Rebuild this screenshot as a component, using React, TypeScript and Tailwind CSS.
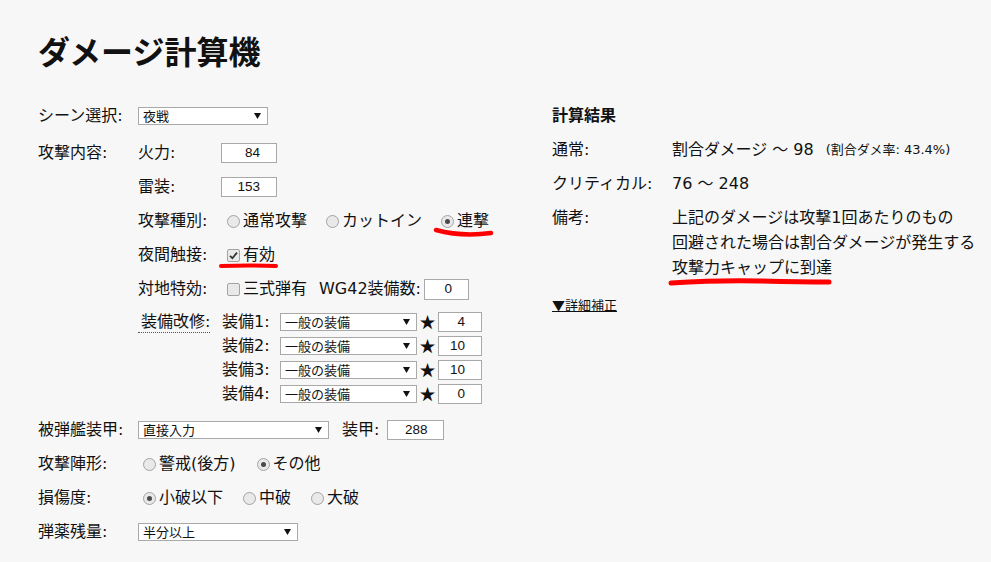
import React from 'react';

// native-looking form bits, drawn by hand so they match the screenshot
function Select({ className, value }: { className: string; value: string }) {
  return (
    <div
      className={`flex items-center justify-between border border-[#a9a9a9] bg-white pl-[4px] pr-[6px] text-[13px] leading-none ${className}`}
    >
      <span className="pt-[1px]">{value}</span>
      <svg width="7" height="6" viewBox="0 0 7 6">
        <polygon points="0,0 7,0 3.5,6" fill="#111" />
      </svg>
    </div>
  );
}

function NumBox({ className, value }: { className: string; value: string }) {
  return (
    <div
      className={`flex h-[20px] items-center justify-end border border-[#a9a9a9] bg-white pr-[16px] font-['Liberation_Sans',sans-serif] text-[13.5px] leading-none ${className}`}
    >
      {value}
    </div>
  );
}

function Radio({ checked, label }: { checked?: boolean; label: string }) {
  return (
    <span className="flex items-center">
      <span className="ml-[5px] mr-[3px] flex h-[13px] w-[13px] items-center justify-center rounded-full border border-[#a3a3a3] bg-[#e9e9e9]">
        {checked && <span className="h-[5px] w-[5px] rounded-full bg-[#4a4a4a]" />}
      </span>
      <span>{label}</span>
    </span>
  );
}

function Check({ checked, label }: { checked?: boolean; label: string }) {
  return (
    <span className="flex items-center">
      <span className="ml-[5px] mr-[3px] flex h-[13px] w-[13px] items-center justify-center rounded-[2px] border border-[#a3a3a3] bg-[#e9e9e9]">
        {checked && (
          <svg width="9" height="9" viewBox="0 0 9 9">
            <path d="M1 4.8 L3.4 7.2 L8 1.6" stroke="#333" strokeWidth="1.8" fill="none" />
          </svg>
        )}
      </span>
      <span>{label}</span>
    </span>
  );
}

const equips = [
  { name: '装備1:', star: '4' },
  { name: '装備2:', star: '10' },
  { name: '装備3:', star: '10' },
  { name: '装備4:', star: '0' },
];

function App() {
  return (
    <div className="relative min-h-[562px] bg-[#f7f7f7] pl-[38px] font-['DejaVu_Sans','Noto_Sans_CJK_JP',sans-serif] text-[16px] leading-[20px] text-[#111]">
      <h1 className="pt-[33px] text-[32px] font-bold leading-[40px]">ダメージ計算機</h1>

      <div className="mt-[26px] flex">
        {/* left: input form */}
        <div className="w-[514px]">
          <div className="mb-[3px] flex h-[34px] items-center">
            <div className="w-[100px]">シーン選択:</div>
            <Select className="h-[18px] w-[130px]" value="夜戦" />
          </div>

          <div className="flex">
            <div className="flex h-[34px] w-[100px] items-center">攻撃内容:</div>
            <div>
              <div className="flex h-[34px] items-center">
                <div className="w-[83px]">火力:</div>
                <NumBox className="w-[56px]" value="84" />
              </div>
              <div className="flex h-[34px] items-center">
                <div className="w-[83px]">雷装:</div>
                <NumBox className="w-[56px]" value="153" />
              </div>
              <div className="flex h-[34px] items-center">
                <div className="w-[84px]">攻撃種別:</div>
                <div className="flex items-center gap-[14px]">
                  <Radio label="通常攻撃" />
                  <Radio label="カットイン" />
                  <Radio checked label="連撃" />
                </div>
              </div>
              <div className="flex h-[34px] items-center">
                <div className="w-[84px]">夜間触接:</div>
                <Check checked label="有効" />
              </div>
              <div className="flex h-[34px] items-center">
                <div className="w-[84px]">対地特効:</div>
                <Check label="三式弾有" />
                <span className="ml-[12px]">WG42装備数:</span>
                <NumBox className="ml-[3px] h-[21px] w-[45px]" value="0" />
              </div>
              <div className="flex pb-[7px] pt-[4px]">
                <div className="flex h-[24px] w-[84px] items-center">
                  <span className="border-b border-dotted border-[#555] pl-[3px] leading-[20px]">装備改修:</span>
                </div>
                <div>
                  {equips.map((e) => (
                    <div key={e.name} className="flex h-[24px] items-center">
                      <div className="w-[58px]">{e.name}</div>
                      <Select className="h-[18px] w-[137px]" value="一般の装備" />
                      <span className="mb-[3px] w-[21px] text-center font-['Noto_Sans_CJK_JP',sans-serif] text-[16px] leading-[16px]">★</span>
                      <NumBox className="w-[44px]" value={e.star} />
                    </div>
                  ))}
                </div>
              </div>
            </div>
          </div>

          <div className="flex h-[34px] items-center">
            <div className="w-[100px]">被弾艦装甲:</div>
            <Select className="h-[18px] w-[191px]" value="直接入力" />
            <span className="ml-[13px]">装甲:</span>
            <NumBox className="ml-[8px] w-[57px]" value="288" />
          </div>
          <div className="flex h-[34px] items-center">
            <div className="w-[100px]">攻撃陣形:</div>
            <div className="flex items-center gap-[16px]">
              <Radio label="警戒(後方)" />
              <Radio checked label="その他" />
            </div>
          </div>
          <div className="flex h-[34px] items-center">
            <div className="w-[100px]">損傷度:</div>
            <div className="flex items-center gap-[15px]">
              <Radio checked label="小破以下" />
              <Radio label="中破" />
              <Radio label="大破" />
            </div>
          </div>
          <div className="flex h-[34px] items-center">
            <div className="w-[100px]">弾薬残量:</div>
            <Select className="h-[18px] w-[160px]" value="半分以上" />
          </div>
        </div>

        {/* right: results */}
        <div>
          <div className="flex h-[34px] items-center font-bold">計算結果</div>
          <div className="flex h-[34px] items-center">
            <div className="w-[120px]">通常:</div>
            <span>割合ダメージ ～ 98</span>
            <span className="ml-[12px] text-[13px]">(割合ダメ率: 43.4%)</span>
          </div>
          <div className="flex h-[34px] items-center">
            <div className="w-[120px]">クリティカル:</div>
            <span>76 ～ 248</span>
          </div>
          <div className="flex pt-[4px] leading-[25px]">
            <div className="w-[120px]">備考:</div>
            <div>
              <div>上記のダメージは攻撃1回あたりのもの</div>
              <div>回避された場合は割合ダメージが発生する</div>
              <div>攻撃力キャップに到達</div>
            </div>
          </div>
          <div className="mt-[17px] font-['Noto_Sans_CJK_JP',sans-serif] text-[13px] leading-[16px] underline">▼詳細補正</div>
        </div>
      </div>

      {/* red hand-drawn annotation marks */}
      <svg className="pointer-events-none absolute left-0 top-0" width="991" height="562">
        <path d="M436 230 Q 462 237 491 233" stroke="#ff0000" strokeWidth="4.5" fill="none" strokeLinecap="round" />
        <path d="M221 266 Q 250 265 276 266" stroke="#ff0000" strokeWidth="4" fill="none" strokeLinecap="round" />
        <path d="M671 283 Q 720 280 760 281 T 829 282" stroke="#ff0000" strokeWidth="5" fill="none" strokeLinecap="round" />
      </svg>
    </div>
  );
}

export default App;
